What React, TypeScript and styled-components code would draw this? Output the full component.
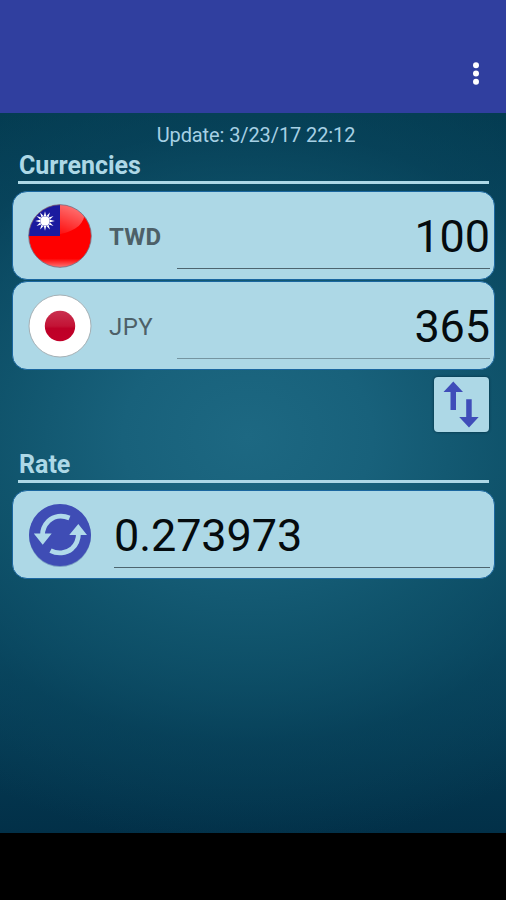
import React from "react";
import styled, { createGlobalStyle } from "styled-components";

const GlobalStyle = createGlobalStyle`
  * { box-sizing: border-box; }
  body { margin: 0; background: #000; font-family: Roboto, sans-serif; }
`;

const Screen = styled.div`
  display: flex;
  flex-direction: column;
  width: 506px;
  height: 900px;
  overflow: hidden;
`;

const AppBar = styled.header`
  display: flex;
  justify-content: flex-end;
  flex: 0 0 113px;
  padding: 61px 18px 0 0;
  background: #303f9f;
`;

const MenuButton = styled.button`
  display: block;
  width: 24px;
  height: 26px;
  padding: 0;
  border: 0;
  background: none;
`;

const Content = styled.main`
  flex: 0 0 720px;
  padding: 9px 12px 0;
  background:
    radial-gradient(ellipse 500px 410px at 49% 45%, #1d6882 0%, #18617b 25%, rgba(17, 86, 110, 0.85) 50%, rgba(10, 72, 96, 0.5) 75%, rgba(4, 56, 80, 0) 100%),
    linear-gradient(#033a4f 0%, #07425c 25%, #0a4a64 50%, #07425c 75%, #023048 100%);
`;

const NavBar = styled.footer`
  flex: 0 0 67px;
  background: #000;
`;

const Updated = styled.p`
  margin: 0;
  padding-left: 6px;
  height: 26px;
  font-size: 20px;
  line-height: 26px;
  letter-spacing: -0.1px;
  color: #a6d0e4;
  text-align: center;
`;

const SectionTitle = styled.h2`
  height: 36px;
  margin: 0 5px 0 6px;
  padding: 3px 0 0 1px;
  border-bottom: 3px solid #add8e6;
  font-size: 25px;
  font-weight: 700;
  line-height: 30px;
  letter-spacing: 0;
  color: #add8e6;
`;

const Card = styled.section<{ $top: number }>`
  display: flex;
  align-items: center;
  width: 483px;
  height: 89px;
  margin-top: ${(p) => p.$top}px;
  padding: 0 4px 0 15px;
  border: 1px solid #1b67a0;
  border-radius: 15px;
  background: #add8e6;
`;

const Round = styled.svg`
  flex: 0 0 64px;
  width: 64px;
  height: 66px;
`;

const Code = styled.span<{ $strong?: boolean }>`
  width: 68px;
  margin-left: 17px;
  padding-top: 2px;
  font-size: 24px;
  font-weight: ${(p) => (p.$strong ? 700 : 400)};
  letter-spacing: ${(p) => (p.$strong ? "0.2px" : "0.4px")};
  color: #4d6068;
`;

const Amount = styled.div<{ $rate?: boolean; $dim?: boolean }>`
  flex: 1;
  height: 67px;
  margin-left: ${(p) => (p.$rate ? 22 : 0)}px;
  border-bottom: 1px solid ${(p) => (p.$dim ? "#7595a1" : "#4d656f")};
  font-size: 45px;
  line-height: 69px;
  letter-spacing: -0.1px;
  text-align: ${(p) => (p.$rate ? "left" : "right")};
  color: #050b0e;
`;

const SwapRow = styled.div`
  display: flex;
  justify-content: flex-end;
  padding: 7px 5px 0 0;
  height: 77px;
`;

const SwapButton = styled.button`
  display: block;
  width: 55px;
  height: 55px;
  padding: 0;
  border: 0;
  border-radius: 4px;
  background: #add8e6;
  box-shadow: 0 0 2px 1px rgba(0, 40, 60, 0.45);
`;

const rays = Array.from({ length: 12 }, (_, i) => i * 30);

function TaiwanFlag() {
  return (
    <Round viewBox="0 0 64 66">
      <defs>
        <clipPath id="tw"><circle cx="32" cy="33" r="31.2" /></clipPath>
        <linearGradient id="gloss" x1="0.7" y1="0" x2="0.4" y2="1">
          <stop offset="0" stopColor="#fff" stopOpacity="0.5" />
          <stop offset="1" stopColor="#fff" stopOpacity="0.08" />
        </linearGradient>
        <linearGradient id="glow" x1="0" y1="0" x2="0" y2="1">
          <stop offset="0.84" stopColor="#fff" stopOpacity="0" />
          <stop offset="1" stopColor="#fff" stopOpacity="0.55" />
        </linearGradient>
      </defs>
      <g clipPath="url(#tw)">
        <rect width="64" height="66" fill="#fe0000" />
        <rect width="32" height="33" fill="#000095" />
        <path d="M32 33V0h24c4 17-4 27-24 31z" fill="url(#gloss)" />
        <path d="M0 33V0h32v33z" fill="#fff" opacity="0.1" />
        <g transform="translate(17 18)" fill="#fff">
          {rays.map((a) => (
            <path key={a} d="M-1.2-5 0-9.8 1.2-5z" transform={`rotate(${a})`} />
          ))}
          <circle r="4.8" />
        </g>
        <rect width="64" height="66" fill="url(#glow)" />
      </g>
      <circle cx="32" cy="33" r="31.3" fill="none" stroke="#766c80" strokeWidth="0.8" />
    </Round>
  );
}

function JapanFlag() {
  return (
    <Round viewBox="0 0 64 66">
      <defs>
        <linearGradient id="sun" x1="0" y1="0" x2="0" y2="1">
          <stop offset="0" stopColor="#c9304f" />
          <stop offset="0.5" stopColor="#c31335" />
          <stop offset="0.58" stopColor="#be0027" />
          <stop offset="1" stopColor="#c20029" />
        </linearGradient>
      </defs>
      <circle cx="32" cy="33" r="31" fill="#fff" stroke="#a5b0b5" strokeWidth="1" />
      <circle cx="32" cy="33" r="15.2" fill="url(#sun)" />
    </Round>
  );
}

function RefreshIcon() {
  return (
    <Round viewBox="0 0 64 66">
      <circle cx="32" cy="34" r="31" fill="#2d4890" opacity="0.4" />
      <circle cx="32" cy="33" r="31" fill="#3f4db5" />
      <g fill="none" stroke="#b0daea" strokeWidth="4.8">
        <path d="M41.5 16C34 12.8 26 13.8 20.5 19 16.5 23 14.5 28 14.5 33" />
        <path d="M22.5 48.7C29.5 52.3 38 51.6 44 46.6 48.5 42.5 50.5 37 50.5 31" />
      </g>
      <path d="M5.8 31.5H23.7L14.7 42.8zM41.2 33H59L50.3 22z" fill="#b0daea" />
    </Round>
  );
}

export default function App() {
  return (
    <>
      <GlobalStyle />
      <Screen>
        <AppBar>
          <MenuButton aria-label="More options">
            <svg width="24" height="26" viewBox="0 0 24 26" fill="#fff">
              <circle cx="12" cy="4.2" r="3" />
              <circle cx="12" cy="12.5" r="3" />
              <circle cx="12" cy="20.8" r="3" />
            </svg>
          </MenuButton>
        </AppBar>
        <Content>
          <Updated>Update: 3/23/17 22:12</Updated>
          <SectionTitle>Currencies</SectionTitle>
          <Card $top={7}>
            <TaiwanFlag />
            <Code $strong>TWD</Code>
            <Amount>100</Amount>
          </Card>
          <Card $top={1}>
            <JapanFlag />
            <Code>JPY</Code>
            <Amount $dim>365</Amount>
          </Card>
          <SwapRow>
            <SwapButton aria-label="Swap currencies">
              <svg width="55" height="55" viewBox="0 0 55 55" fill="#3f4db9">
                <path d="M19.3 4.5 29 15h-7v18h-5.5V15h-7zM35 50.5 25.2 40h7V22.3h5.5V40h7z" />
              </svg>
            </SwapButton>
          </SwapRow>
          <SectionTitle>Rate</SectionTitle>
          <Card $top={7}>
            <RefreshIcon />
            <Amount $rate>0.273973</Amount>
          </Card>
        </Content>
        <NavBar />
      </Screen>
    </>
  );
}
